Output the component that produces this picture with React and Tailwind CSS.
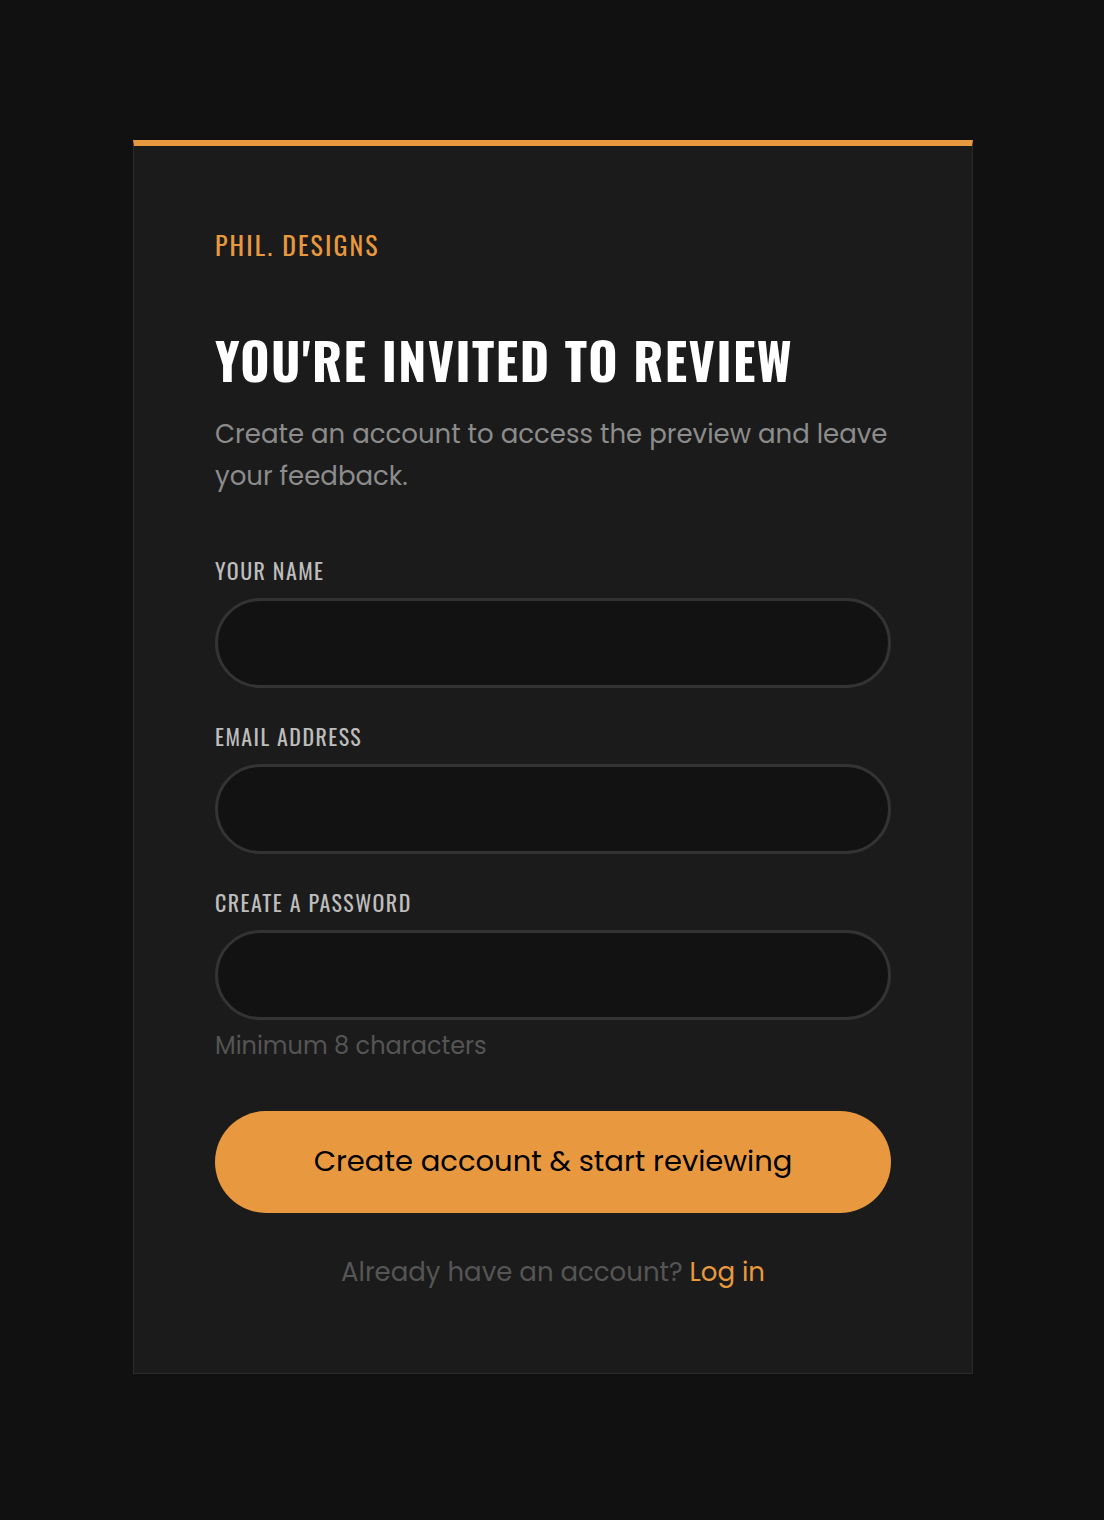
import React, { useState } from 'react'

const display = "font-['Oswald','Liberation_Sans_Narrow','DejaVu_Sans_Condensed',sans-serif]"
const body = "font-['Poppins','DejaVu_Sans','Open_Sans',sans-serif]"

function Field({ label, type = 'text', value, onChange, hint }) {
  return (
    <label className="flex flex-col">
      <span className={`${display} text-[22px] uppercase tracking-[0.065em] text-[#bdbdbd] leading-none`}>
        {label}
      </span>
      <input
        type={type}
        value={value}
        onChange={(e) => onChange(e.target.value)}
        className={`${body} mt-[17px] h-[90px] w-full rounded-full border-[3px] border-[#333] bg-[#121212] px-8 text-[22px] text-white outline-none focus:border-[#e8993f]`}
      />
      {hint && (
        <span className={`${body} mt-[14px] text-[24px] leading-none text-[#555]`}>{hint}</span>
      )}
    </label>
  )
}

export default function App() {
  const [name, setName] = useState('')
  const [email, setEmail] = useState('')
  const [password, setPassword] = useState('')

  return (
    <div className="flex min-h-screen justify-center bg-[#111111] pl-[2px] pt-[140px] pb-[146px]">
      <div className="w-[840px] border border-[#2b2b2b] border-t-[6px] border-t-[#e8993f] bg-[#1b1b1b] px-[81px] pt-[86px] pb-[81px]">
        <div className={`${display} text-[26px] uppercase leading-none tracking-[0.08em] text-[#e8993f]`}>
          Phil. Designs
        </div>

        <h1 className={`${display} mt-[76px] text-[50px] font-bold uppercase leading-none tracking-[0.03em] text-white`}>
          You're invited to review
        </h1>
        <p className={`${body} mt-[29px] text-[26px] leading-[42px] text-[#8c8c8c]`}>
          Create an account to access the preview and leave your feedback.
        </p>

        <form className="mt-[62px] flex flex-col gap-[37px]" onSubmit={(e) => e.preventDefault()}>
          <Field label="Your name" value={name} onChange={setName} />
          <Field label="Email address" type="email" value={email} onChange={setEmail} />
          <Field
            label="Create a password"
            type="password"
            value={password}
            onChange={setPassword}
            hint="Minimum 8 characters"
          />
        </form>

        <button
          type="button"
          className={`${body} mt-[53px] flex h-[102px] w-full items-center justify-center rounded-full bg-[#e8993f] text-[29px] text-black`}
        >
          Create account &amp; start reviewing
        </button>

        <p className={`${body} mt-[40px] text-center text-[26px] text-[#555]`}>
          Already have an account?{' '}
          <a href="#" className="text-[#e8993f]">
            Log in
          </a>
        </p>
      </div>
    </div>
  )
}
